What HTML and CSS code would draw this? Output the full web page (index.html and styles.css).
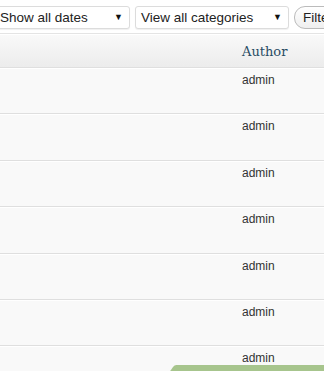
FILE: index.html
```html
<!DOCTYPE html>
<html lang="en">
    <head>
        <link rel="stylesheet" href="styles.css">
    </head>
    <body>
        <div class="filters">
            <div class="select sel_dates"><span>Show all dates</span><span class="arrow">&#9660;</span></div>
            <div class="select sel_cats"><span>View all categories</span><span class="arrow">&#9660;</span></div>
            <button class="btn">Filter</button>
        </div>

        <div class="posts">
            <div class="head"><span class="col_author">Author</span></div>
            <div class="row"><span class="col_author">admin</span></div>
            <div class="row"><span class="col_author">admin</span></div>
            <div class="row"><span class="col_author">admin</span></div>
            <div class="row"><span class="col_author">admin</span></div>
            <div class="row"><span class="col_author">admin</span></div>
            <div class="row"><span class="col_author">admin</span></div>
            <div class="row"><span class="col_author">admin</span></div>
        </div>

        <div class="green_tab"></div>
    </body>
</html>
```

FILE: styles.css
```css
body{
    margin: 0;
    background: #ffffff;
    font-family: "Liberation Sans", Arial, sans-serif;
    overflow: hidden;
    width: 324px;
    height: 371px;
    position: relative;
}

.filters{
    display: flex;
    align-items: center;
    gap: 5px;
    height: 33px;
    margin-left: -6px;
    padding-top: 1px;
    box-sizing: border-box;
}

.select{
    flex-shrink: 0;
    display: flex;
    justify-content: space-between;
    align-items: center;
    height: 23px;
    box-sizing: border-box;
    border: 1px solid #dcdcdc;
    border-radius: 3px;
    background: #ffffff;
    padding: 0 6px 0 5px;
    font-size: 13.5px;
    color: #222222;
    box-shadow: 0 1px 1px #f0f0f0;
}

.sel_dates{
    width: 136px;
}

.sel_cats{
    width: 154px;
}

.arrow{
    font-size: 9px;
    color: #111111;
}

.btn{
    flex-shrink: 0;
    height: 23px;
    padding: 0 8px;
    border: 1px solid #bbbbbb;
    border-radius: 11px;
    background: linear-gradient(#ffffff, #efefef);
    font-family: "Liberation Sans", Arial, sans-serif;
    font-size: 13.5px;
    color: #222222;
}

.posts{
    border-top: 1px solid #e4e4e4;
}

.head{
    height: 32px;
    background: linear-gradient(#f9f9f9, #ececec);
    border-top: 1px solid #ffffff;
    border-bottom: 1px solid #dfdfdf;
    display: flex;
    align-items: center;
    font-family: Georgia, "DejaVu Serif", "Liberation Serif", serif;
    font-size: 13px;
    color: #284b63;
}

.head .col_author{
    margin-left: 242px;
}

.row{
    height: 44.4px;
    background: #f9f9f9;
    border-bottom: 1px solid #dfdfdf;
    border-top: 1px solid #ffffff;
    font-size: 12px;
    color: #333333;
}

.row .col_author{
    display: block;
    margin-left: 242px;
    padding-top: 4px;
}

.green_tab{
    position: absolute;
    left: 166px;
    top: 365px;
    width: 170px;
    height: 12px;
    background: #a7c58d;
    transform: skewX(-35deg);
    transform-origin: bottom left;
    border-radius: 2px 0 0 0;
}
```
